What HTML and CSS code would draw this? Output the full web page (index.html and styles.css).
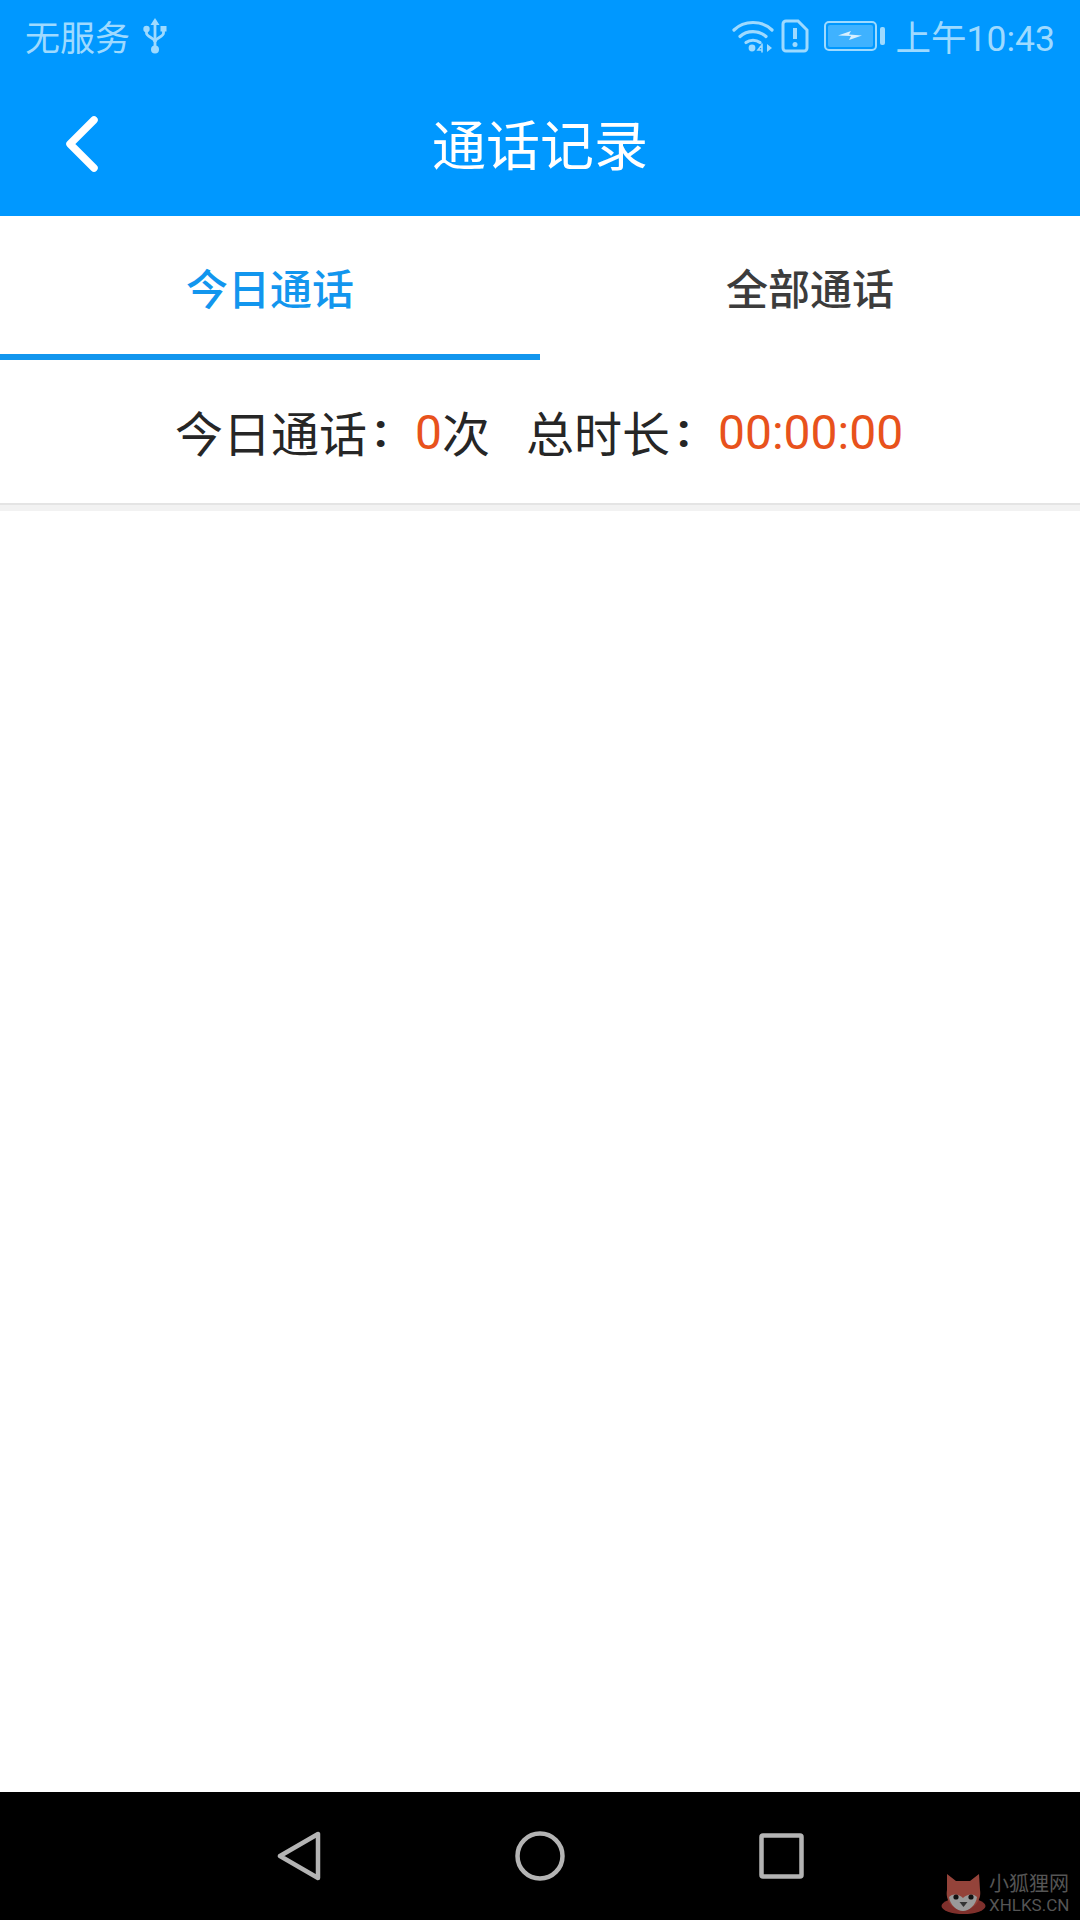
FILE: index.html
```html
<!DOCTYPE html>
<html lang="zh-CN">
<head>
    <meta charset="UTF-8">
    <meta name="viewport" content="width=device-width, initial-scale=1.0">
    <title>通话记录</title>
    <link rel="stylesheet" href="styles.css">
</head>
<body>
    <div class="page">
        <header class="header">
            <div class="status">
                <div class="status-left">
                    <span>无服务</span>
                    <svg class="icon-usb" width="24" height="36" viewBox="0 0 24 36" fill="none" stroke="currentColor" stroke-width="2.800">
                        <path d="M12 5V31"/>
                        <path d="M12 0l4.500 7h-9z" fill="currentColor" stroke="none"/>
                        <path d="M3.500 12v3c0 4 8.500 5 8.500 9"/>
                        <path d="M20.500 12v3c0 4-8.500 5-8.500 9"/>
                        <circle cx="3.500" cy="11" r="3.200" fill="currentColor" stroke="none"/>
                        <rect x="17.500" y="8" width="6" height="5.500" fill="currentColor" stroke="none"/>
                        <circle cx="12" cy="31.500" r="4" fill="currentColor" stroke="none"/>
                    </svg>
                </div>
                <div class="status-right">
                    <svg class="icon-wifi" width="42" height="34" viewBox="0 0 42 34" fill="none" stroke="currentColor" stroke-width="3.200" stroke-linecap="round">
                        <path d="M2 11C12 1 30 1 40 11"/>
                        <path d="M8 17.500C15 11 27 11 34 17.500"/>
                        <path d="M14 23.500C18 20.500 24 20.500 28 23.500"/>
                        <circle cx="20" cy="29" r="3.400" fill="currentColor" stroke="none"/>
                        <path d="M29 27l-3 4h4M30 25v8" stroke-width="1.600"/>
                        <path d="M35 25v8l5-4z" fill="currentColor" stroke="none"/>
                    </svg>
                    <svg class="icon-sim" width="28" height="34" viewBox="0 0 28 34" fill="none" stroke="currentColor" stroke-width="3">
                        <path d="M5 2h12l9 9v18a3 3 0 0 1-3 3H5a3 3 0 0 1-3-3V5a3 3 0 0 1 3-3z"/>
                        <path d="M14 9v11" stroke-width="4"/>
                        <circle cx="14" cy="25.500" r="2.500" fill="currentColor" stroke="none"/>
                    </svg>
                    <svg class="icon-battery" width="62" height="30" viewBox="0 0 62 30" fill="none">
                        <rect x="1" y="1" width="51" height="28" rx="4" stroke="currentColor" stroke-width="2"/>
                        <rect x="4" y="4" width="45" height="22" rx="2" fill="currentColor" fill-opacity=".4"/>
                        <path d="M14 14.500l13-4.500-2 3.500 13 1-13 4.500 2-4z" fill="#fff" fill-opacity=".8"/>
                        <rect x="56" y="6" width="5" height="18" rx="2" fill="currentColor"/>
                    </svg>
                    <span class="clock">上午10:43</span>
                </div>
            </div>
            <div class="titlebar">
                <svg class="back" width="34" height="58" viewBox="0 0 34 58" fill="none" stroke="#fff" stroke-width="7.500" stroke-linecap="round" stroke-linejoin="round">
                    <path d="M29 5L5 29l24 24"/>
                </svg>
                <h1>通话记录</h1>
                <span></span>
            </div>
        </header>

        <div class="tabs">
            <div class="tab active">今日通话</div>
            <div class="tab">全部通话</div>
        </div>

        <div class="summary">
            <span>今日通话</span><span class="colon">:</span><span class="num">0</span><span>次</span>
            <span class="total">总时长</span><span class="colon">:</span><span class="num">00:00:00</span>
        </div>
        <div class="divider"></div>

        <main class="content"></main>

        <footer class="navbar">
            <svg width="44" height="50" viewBox="0 0 44 50" fill="none" stroke="#b4b4b4" stroke-width="4.500" stroke-linejoin="round">
                <path d="M41 3V47L3 25z"/>
            </svg>
            <svg width="50" height="50" viewBox="0 0 50 50" fill="none" stroke="#b4b4b4" stroke-width="4.500">
                <circle cx="25" cy="25" r="22.500"/>
            </svg>
            <svg width="45" height="46" viewBox="0 0 45 46" fill="none" stroke="#b4b4b4" stroke-width="4.500" stroke-linejoin="round">
                <rect x="2.500" y="2.500" width="40" height="41" rx="1.500"/>
            </svg>

            <div class="watermark">
                <svg width="45" height="41" viewBox="0 0 45 41">
                    <ellipse cx="22.500" cy="33" rx="22" ry="8" fill="#7f302c"/>
                    <path d="M6 1l9 7h14l9-7 1 16c2 11-7 20-17 20S4 28 6 17z" fill="#94433a"/>
                    <path d="M8 24c4-4 10-3 14 1 4-4 10-5 14-1-1 8-8 14-14 14S9 32 8 24z" fill="#9a9a9a"/>
                    <circle cx="15" cy="24" r="2.600" fill="#111"/>
                    <circle cx="30" cy="24" r="2.600" fill="#111"/>
                    <path d="M18.500 29h8l-4 5z" fill="#333"/>
                </svg>
                <div class="mark-text">
                    <div class="mark-cn">小狐狸网</div>
                    <div class="mark-en">XHLKS.CN</div>
                </div>
            </div>
        </footer>
    </div>
</body>
</html>
```

FILE: styles.css
```css
html, body {
    margin: 0;
    padding: 0;
}
body {
    font-family: Roboto, "Noto Sans CJK SC", sans-serif;
    background: #fff;
}
.page {
    width: 1080px;
    height: 1920px;
    display: flex;
    flex-direction: column;
    overflow: hidden;
}

/* blue top part */
.header {
    height: 216px;
    background: #0098ff;
    display: flex;
    flex-direction: column;
}
.status {
    height: 70px;
    padding: 0 25px;
    display: flex;
    justify-content: space-between;
    align-items: center;
    color: #9edaff;
    font-size: 35px;
}
.status-left {
    display: flex;
    align-items: center;
    gap: 13px;
}
.status-right {
    display: flex;
    align-items: center;
}
.status svg {
    margin-top: 2px;
}
.icon-wifi {
    margin-right: 7px;
}
.icon-sim {
    margin-right: 15px;
}
.icon-battery {
    margin-right: 10px;
}
.clock {
    font-size: 35.5px;
}
.titlebar {
    flex: 1;
    display: grid;
    grid-template-columns: 1fr auto 1fr;
    align-items: center;
    padding-bottom: 2px;
}
.titlebar h1 {
    margin: 0;
    font-size: 54px;
    font-weight: 400;
    color: #fff;
}
.back {
    margin: 4px 0 0 65px;
}

/* tabs */
.tabs {
    display: flex;
    height: 144px;
}
.tab {
    flex: 1;
    box-sizing: border-box;
    padding-top: 44px;
    text-align: center;
    font-size: 42px;
    font-weight: 500;
    color: #3c3c3c;
    line-height: 62px;
}
.tab.active {
    color: #1296ee;
    border-bottom: 6px solid #1296ee;
}

/* today summary */
.summary {
    box-sizing: border-box;
    height: 143px;
    padding: 0 0 2px 175px;
    display: flex;
    align-items: center;
    font-size: 48px;
    color: #262626;
}
.colon {
    box-sizing: border-box;
    width: 48px;
    padding-left: 7px;
    font-weight: 700;
}
.num {
    color: #e8521c;
    margin-top: 4px;
}
.total {
    margin-left: 36px;
}
.divider {
    height: 2px;
    background: #e4e4e4;
    border-bottom: 6px solid #f2f2f2;
}

.content {
    flex: 1;
    background: #fff;
}

/* android buttons */
.navbar {
    position: relative;
    height: 128px;
    background: #000;
    display: flex;
    justify-content: center;
    align-items: center;
    gap: 194px;
}
.watermark {
    position: absolute;
    left: 941px;
    bottom: 6px;
    display: flex;
    align-items: center;
    gap: 3px;
    color: #555;
}
.mark-text {
    line-height: 1;
}
.mark-cn {
    font-size: 20px;
}
.mark-en {
    font-size: 17px;
    margin-top: 3px;
}
```
